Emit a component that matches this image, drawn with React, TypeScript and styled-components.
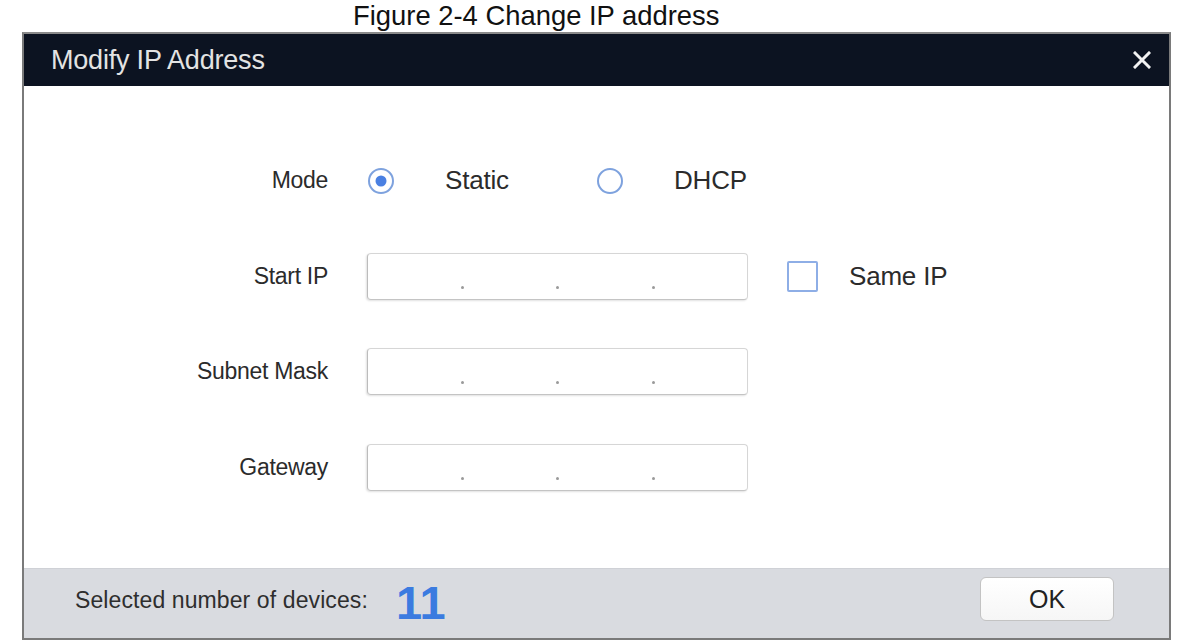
import React, { useState } from 'react'
import styled, { createGlobalStyle } from 'styled-components'

const GlobalStyle = createGlobalStyle`
  html, body {
    margin: 0;
    padding: 0;
    background: #ffffff;
  }
  body {
    width: 1178px;
    height: 643px;
    overflow: hidden;
    font-family: "Liberation Sans", Arial, sans-serif;
  }
`

const Page = styled.div`
  display: flex;
  flex-direction: column;
  align-items: stretch;
  padding: 0 7px 3px 22px;
  height: 643px;
  box-sizing: border-box;
`

const Caption = styled.div`
  font-family: "Liberation Sans", Arial, sans-serif;
  font-size: 27.4px;
  line-height: 31px;
  height: 31px;
  color: #111;
  padding-left: 331px;
  margin-bottom: 1px;
`

const Dialog = styled.div`
  flex: 1;
  display: flex;
  flex-direction: column;
  border: 2px solid #7a7a7a;
  border-top-color: #8a8a8a;
  background: #ffffff;
`

const TitleBar = styled.div`
  height: 52px;
  background: #0c1321;
  display: flex;
  align-items: center;
  justify-content: space-between;
  padding: 0 16px 0 27px;
`

const Title = styled.div`
  color: #e3e3e3;
  font-size: 27px;
  letter-spacing: -0.2px;
`

const CloseButton = styled.button`
  background: none;
  border: 0;
  padding: 0;
  width: 22px;
  height: 22px;
  display: flex;
  align-items: center;
  justify-content: center;
  cursor: pointer;
`

const Body = styled.div`
  flex: 1;
  display: grid;
  grid-template-columns: 304px auto;
  grid-auto-rows: 47px;
  row-gap: 48.5px;
  column-gap: 39px;
  align-content: start;
  padding-top: 71px;
`

const Label = styled.div`
  justify-self: end;
  align-self: center;
  font-size: 23px;
  color: #2b2b2b;
  letter-spacing: -0.3px;
`

const Controls = styled.div`
  display: flex;
  align-items: center;
`

const RadioOption = styled.label`
  display: flex;
  align-items: center;
  gap: 50px;
  width: 229px;
  cursor: pointer;
`

const OptionText = styled.span`
  font-size: 26px;
  color: #2b2b2b;
  letter-spacing: -0.2px;
`

const IpBox = styled.div`
  width: 381px;
  height: 47px;
  box-sizing: border-box;
  border: 1px solid #d6d6d6;
  border-left-color: #bcbcbc;
  border-bottom-color: #c4c4c4;
  border-radius: 4px;
  box-shadow: -1px 1px 2px rgba(0, 0, 0, 0.12);
  display: flex;
  align-items: flex-end;
  padding-bottom: 9px;
`

const Segment = styled.span`
  flex: 1;
`

const Dot = styled.span`
  width: 3px;
  height: 3px;
  border-radius: 50%;
  background: #9a9a9a;
  margin-bottom: 1px;
`

const CheckLabel = styled.label`
  display: flex;
  align-items: center;
  gap: 31px;
  margin-left: 39px;
  cursor: pointer;
`

const Checkbox = styled.span`
  width: 31px;
  height: 31px;
  box-sizing: border-box;
  border: 2px solid #8eaee6;
  border-radius: 2px;
  background: #fff;
`

const Footer = styled.div`
  height: 70px;
  box-sizing: border-box;
  background: #d9dbe0;
  border-top: 1px solid #cfd1d6;
  display: flex;
  align-items: center;
  padding: 0 55px 6px 51px;
`

const FooterText = styled.span`
  font-size: 23px;
  color: #2e2e2e;
  letter-spacing: 0.1px;
`

const Count = styled.span`
  font-size: 47px;
  font-weight: bold;
  color: #3b7be0;
  margin-left: 28px;
  margin-top: 4px;
`

const OkButton = styled.button`
  margin-left: auto;
  width: 134px;
  height: 44px;
  background: linear-gradient(#ffffff, #f6f6f6);
  border: 1px solid #c3c3c3;
  border-radius: 6px;
  font-family: "Liberation Sans", Arial, sans-serif;
  font-size: 25px;
  color: #222;
  cursor: pointer;
  margin-top: -3px;
`

const RadioIcon: React.FC<{ checked: boolean }> = ({ checked }) => (
  <svg width="28" height="28" viewBox="0 0 28 28">
    <circle cx="14" cy="14" r="12" fill="#fff" stroke="#7ea2de" strokeWidth="2" />
    {checked && <circle cx="14" cy="14" r="5.5" fill="#4a80e2" />}
  </svg>
)

const IpInput: React.FC = () => (
  <IpBox>
    <Segment />
    <Dot />
    <Segment />
    <Dot />
    <Segment />
    <Dot />
    <Segment />
  </IpBox>
)

const App: React.FC = () => {
  const [mode, setMode] = useState<'static' | 'dhcp'>('static')

  return (
    <>
      <GlobalStyle />
      <Page>
        <Caption>Figure 2-4 Change IP address</Caption>
        <Dialog>
          <TitleBar>
            <Title>Modify IP Address</Title>
            <CloseButton aria-label="Close">
              <svg width="18" height="18" viewBox="0 0 18 18">
                <path d="M2 2 L16 16 M16 2 L2 16" stroke="#f2f2f2" strokeWidth="3" strokeLinecap="square" />
              </svg>
            </CloseButton>
          </TitleBar>
          <Body>
            <Label>Mode</Label>
            <Controls>
              <RadioOption onClick={() => setMode('static')}>
                <RadioIcon checked={mode === 'static'} />
                <OptionText>Static</OptionText>
              </RadioOption>
              <RadioOption onClick={() => setMode('dhcp')}>
                <RadioIcon checked={mode === 'dhcp'} />
                <OptionText>DHCP</OptionText>
              </RadioOption>
            </Controls>

            <Label>Start IP</Label>
            <Controls>
              <IpInput />
              <CheckLabel>
                <Checkbox />
                <OptionText>Same IP</OptionText>
              </CheckLabel>
            </Controls>

            <Label>Subnet Mask</Label>
            <Controls>
              <IpInput />
            </Controls>

            <Label>Gateway</Label>
            <Controls>
              <IpInput />
            </Controls>
          </Body>
          <Footer>
            <FooterText>Selected number of devices:</FooterText>
            <Count>11</Count>
            <OkButton>OK</OkButton>
          </Footer>
        </Dialog>
      </Page>
    </>
  )
}

export default App
